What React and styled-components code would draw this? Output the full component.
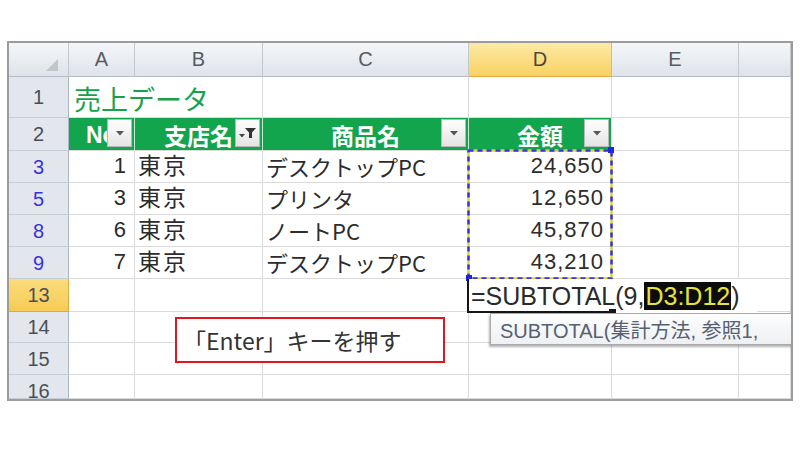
import styled, { createGlobalStyle } from 'styled-components';

const GlobalStyle = createGlobalStyle`
  html, body {
    margin: 0;
    padding: 0;
    background: #ffffff;
  }
  body {
    width: 800px;
    height: 460px;
    overflow: hidden;
    font-family: "Liberation Sans", "Noto Sans CJK JP", sans-serif;
  }
`;

const jp = `"Noto Sans CJK JP", "Liberation Sans", sans-serif`;

const Page = styled.div`
  padding: 41px 0 0 7px;
`;

const Sheet = styled.div`
  position: relative;
  width: 782px;
  border: 2px solid #9c9c9c;
  background: #ffffff;
  display: grid;
  grid-template-columns: 60px 66px 128px 206px 143px 127px 52px;
  grid-template-rows: 34px 41px 33px repeat(4, 32px) 33px 31px 32px 24px;
  overflow: hidden;
`;

// column header strip
const Corner = styled.div`
  position: relative;
  background: linear-gradient(#f4f6f9, #dfe3e9);
  border-right: 1px solid #c3c8d0;
  border-bottom: 1px solid #b4bcc8;

  svg {
    position: absolute;
    right: 10px;
    bottom: 5px;
  }
`;

const ColHead = styled.div`
  display: flex;
  align-items: center;
  justify-content: center;
  font-size: 20px;
  color: ${(p) => (p.$active ? '#4a4a3a' : '#555b63')};
  background: ${(p) =>
    p.$active
      ? 'linear-gradient(#fdeaa6, #f8d162)'
      : 'linear-gradient(#f4f6f9, #dfe3e9)'};
  border-right: 1px solid ${(p) => (p.$active ? '#e7b95a' : '#c3c8d0')};
  border-bottom: 1px solid ${(p) => (p.$active ? '#eaa640' : '#b4bcc8')};
`;

const RowHead = styled.div`
  display: flex;
  align-items: ${(p) => (p.$clip ? 'flex-start' : 'center')};
  justify-content: center;
  overflow: hidden;
  font-size: 20px;
  line-height: 32px;
  color: ${(p) => (p.$blue ? '#3434dc' : '#4a4f57')};
  background: ${(p) =>
    p.$active ? 'linear-gradient(#fbdd7c, #f6cb56)' : '#e3e7ed'};
  border-right: 1px solid ${(p) => (p.$active ? '#e3a845' : '#a9b6c6')};
  border-bottom: 1px solid ${(p) => (p.$active ? '#e3a845' : '#c8ced7')};
`;

const Cell = styled.div`
  position: relative;
  display: flex;
  align-items: flex-end;
  justify-content: ${(p) => (p.$right ? 'flex-end' : 'flex-start')};
  padding: 0 ${(p) => (p.$right ? 7 : 3)}px 3px 3px;
  white-space: nowrap;
  font-size: 22px;
  line-height: 1.2;
  color: #2c2c2c;
  border-right: 1px solid #dadada;
  border-bottom: 1px solid #dadada;
  grid-column: ${(p) => p.$span || 'auto'};
`;

const Title = styled.span`
  font-family: ${jp};
  font-size: 27px;
  line-height: 1.1;
  color: #17a24a;
  padding-left: 2px;
`;

const JpText = styled.span`
  font-family: ${jp};
  font-size: ${(p) => p.$size || 22}px;
  letter-spacing: ${(p) => p.$spacing || 0}px;
`;

const Num = styled.span`
  font-size: 22px;
  letter-spacing: 1px;
`;

const HeadCell = styled.div`
  position: relative;
  display: flex;
  align-items: center;
  justify-content: ${(p) => (p.$left ? 'flex-start' : 'center')};
  padding-left: ${(p) => (p.$left ? 17 : 0)}px;
  padding-top: 2px;
  white-space: nowrap;
  background: #13a54e;
  color: #ffffff;
  font-family: ${(p) => (p.$left ? '"Liberation Sans", sans-serif' : jp)};
  font-weight: 700;
  font-size: 23px;
  line-height: 1;
  border-right: 1px solid #cfe6d6;
  border-bottom: 1px solid #dadada;
`;

const FilterBtn = styled.span`
  position: absolute;
  right: 2px;
  top: 1px;
  width: 25px;
  height: 28px;
  box-sizing: border-box;
  border: 1px solid #b8b8b8;
  background: linear-gradient(#ffffff, #e4e4e4);
  display: flex;
  align-items: center;
  justify-content: center;
`;

// overlays
const Ants = styled.svg`
  position: absolute;
  left: 458px;
  top: 106px;
  overflow: visible;
  pointer-events: none;
`;

const EditBox = styled.div`
  position: absolute;
  left: 458px;
  top: 236px;
  width: 290px;
  height: 34px;
  box-sizing: border-box;
  background: #ffffff;
  border-left: 2px solid #151515;
  display: flex;
  align-items: center;
  padding-left: 2px;
  font-size: 25px;
  color: #2a2a2a;
  white-space: nowrap;

  &::after {
    content: '';
    position: absolute;
    left: 0;
    bottom: 0;
    width: 140px;
    height: 2px;
    background: #151515;
  }
`;

const Handle = styled.span`
  position: absolute;
  left: 140px;
  bottom: -2px;
  width: 7px;
  height: 6px;
  background: #151515;
`;

const RefMark = styled.span`
  background: #0c0c0c;
  color: #e4e43a;
  line-height: 28px;
  padding: 0 1px;
`;

const Tip = styled.div`
  position: absolute;
  left: 481px;
  top: 270px;
  width: 340px;
  height: 32px;
  box-sizing: border-box;
  border: 1px solid #a9a9a9;
  background: linear-gradient(#fdfdfd, #eef0f3);
  box-shadow: -1px 2px 2px rgba(0, 0, 0, 0.3);
  display: flex;
  align-items: center;
  padding-left: 9px;
  font-size: 20px;
  color: #556073;
  white-space: pre;
`;

const Callout = styled.div`
  position: absolute;
  left: 166px;
  top: 274px;
  width: 270px;
  height: 46px;
  box-sizing: border-box;
  border: 2px solid #e3141c;
  background: #ffffff;
  display: flex;
  align-items: center;
  padding-left: 6px;
  font-family: ${jp};
  font-size: 23px;
  color: #333333;
  white-space: nowrap;
`;

const DropArrow = () => (
  <svg width="12" height="8" viewBox="0 0 12 8">
    <path d="M2 2 H10 L6 6.5 Z" fill="#555" />
  </svg>
);

const FunnelArrow = () => (
  <svg width="20" height="16" viewBox="0 0 20 16">
    <path d="M1 9 H7 L4 12.5 Z" fill="#444" />
    <path d="M7 3 H18 L14 7.5 V13 H11 V7.5 Z" fill="#333" />
  </svg>
);

const MarchingAnts = ({ w, h }) => (
  <Ants width={w} height={h} viewBox={`0 0 ${w} ${h}`}>
    <rect x="1.5" y="1.5" width={w - 3} height={h - 3} fill="none" stroke="#dcd43c" strokeWidth="2.5" />
    <rect
      x="1.5"
      y="1.5"
      width={w - 3}
      height={h - 3}
      fill="none"
      stroke="#3636e4"
      strokeWidth="2.5"
      strokeDasharray="5 4"
    />
    <rect x={w - 5} y="-2" width="6" height="6" fill="#2424d8" />
    <rect x="-1" y={h - 5} width="6" height="6" fill="#2424d8" />
  </Ants>
);

const rows = [
  { n: 3, a: '1', c: 'デスクトップPC', d: '24,650' },
  { n: 5, a: '3', c: 'プリンタ', d: '12,650' },
  { n: 8, a: '6', c: 'ノートPC', d: '45,870' },
  { n: 9, a: '7', c: 'デスクトップPC', d: '43,210' },
];

const emptyRows = [
  { n: 13, active: true },
  { n: 14 },
  { n: 15 },
  { n: 16, clip: true },
];

const letters = ['A', 'B', 'C', 'D', 'E', ''];

export default function App() {
  return (
    <Page>
      <GlobalStyle />
      <Sheet>
        <Corner>
          <svg width="12" height="12" viewBox="0 0 12 12">
            <path d="M12 0 V12 H0 Z" fill="#c2c6cc" />
          </svg>
        </Corner>
        {letters.map((l, i) => (
          <ColHead key={i} $active={l === 'D'}>
            {l}
          </ColHead>
        ))}

        <RowHead>1</RowHead>
        <Cell $span="span 2">
          <Title>売上データ</Title>
        </Cell>
        <Cell />
        <Cell />
        <Cell />
        <Cell />

        <RowHead>2</RowHead>
        <HeadCell $left>
          No
          <FilterBtn>
            <DropArrow />
          </FilterBtn>
        </HeadCell>
        <HeadCell>
          支店名
          <FilterBtn>
            <FunnelArrow />
          </FilterBtn>
        </HeadCell>
        <HeadCell>
          商品名
          <FilterBtn>
            <DropArrow />
          </FilterBtn>
        </HeadCell>
        <HeadCell>
          金額
          <FilterBtn>
            <DropArrow />
          </FilterBtn>
        </HeadCell>
        <Cell />
        <Cell />

        {rows.map((r) => [
          <RowHead key={`h${r.n}`} $blue>
            {r.n}
          </RowHead>,
          <Cell key={`a${r.n}`} $right>
            <Num>{r.a}</Num>
          </Cell>,
          <Cell key={`b${r.n}`}>
            <JpText $size={23} $spacing={2}>
              東京
            </JpText>
          </Cell>,
          <Cell key={`c${r.n}`}>
            <JpText>{r.c}</JpText>
          </Cell>,
          <Cell key={`d${r.n}`} $right>
            <Num>{r.d}</Num>
          </Cell>,
          <Cell key={`e${r.n}`} />,
          <Cell key={`f${r.n}`} />,
        ])}

        {emptyRows.map((r) => [
          <RowHead key={`h${r.n}`} $active={r.active} $clip={r.clip}>
            {r.n}
          </RowHead>,
          ...[0, 1, 2, 3, 4, 5].map((c) => <Cell key={`${r.n}-${c}`} />),
        ])}

        <MarchingAnts w={146} h={131} />
        <EditBox>
          =SUBTOTAL(9,<RefMark>D3:D12</RefMark>)
          <Handle />
        </EditBox>
        <Tip>SUBTOTAL(集計方法, 参照1,</Tip>
        <Callout>「Enter」キーを押す</Callout>
      </Sheet>
    </Page>
  );
}
